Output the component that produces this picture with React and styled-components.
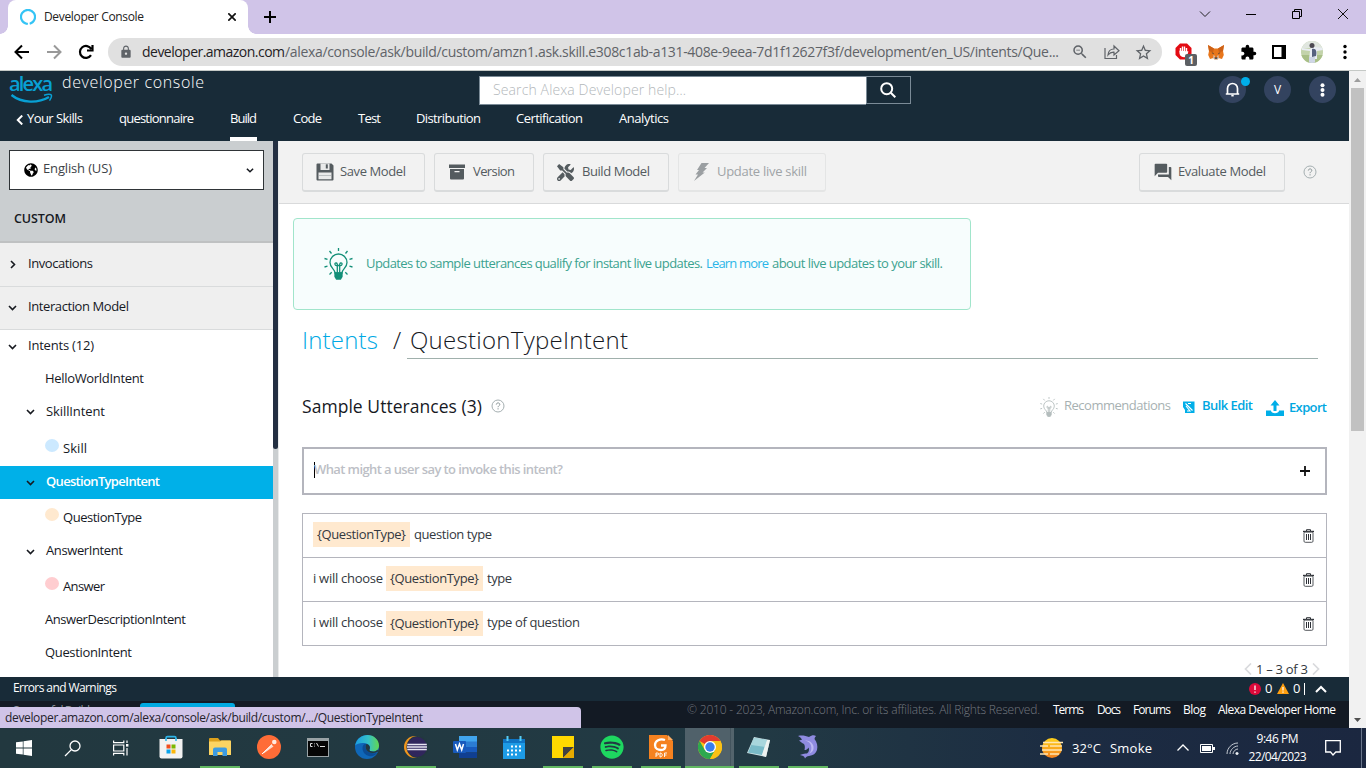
import React, { useLayoutEffect, useRef, useState } from "react";
import styled, { createGlobalStyle } from "styled-components";
import { FaGlobeAmericas, FaTools, FaSpotify } from "react-icons/fa";
import { MdForum, MdLock, MdZoomOut, MdStarBorder, MdExtension } from "react-icons/md";

const Global = createGlobalStyle`
  *, *::before, *::after { box-sizing: border-box; }
  body { margin: 0; background: #fff; overflow: hidden; font-family: "Open Sans", "Noto Sans", sans-serif; font-size: 13px; color: #16191f; }
  svg { display: block; flex: none; }
`;

/* ---------- text that is tracked to fill a given measure ---------- */
const TextBox = styled.span`
  display: block;
  flex: none;
  white-space: nowrap;
  width: ${(p) => p.$w}px;
  margin-left: ${(p) => p.$ml || 0}px;
  margin-bottom: ${(p) => (p.$up || 0) * 2}px;
  font-size: ${(p) => p.$size || 13}px;
  font-weight: ${(p) => p.$weight || 400};
  color: ${(p) => p.$color || "inherit"};
  line-height: ${(p) => p.$lh || 18}px;
`;

function Label({ children, w, ml, size, weight, color, lh, up }) {
  const ref = useRef(null);
  const [tracking, setTracking] = useState(0);
  useLayoutEffect(() => {
    const range = document.createRange();
    range.selectNodeContents(ref.current);
    const natural = range.getBoundingClientRect().width;
    setTracking((w - natural) / Math.max(1, String(children).length - 1));
  }, []);
  return (
    <TextBox $w={w} $ml={ml} $size={size} $weight={weight} $color={color} $lh={lh} $up={up}>
      <span ref={ref} style={{ letterSpacing: tracking }}>{children}</span>
    </TextBox>
  );
}

const Gap = styled.i`
  flex: none;
  width: ${(p) => p.$w}px;
`;

const Screen = styled.div`
  width: 1366px;
  height: 768px;
  display: flex;
  flex-direction: column;
  overflow: hidden;
`;

/* ---------- browser chrome ---------- */
const TabStrip = styled.div`
  height: 34px;
  flex: none;
  display: flex;
  align-items: center;
  background: #d0c4e8;
  padding-left: 8px;
`;
const Tab = styled.div`
  position: relative;
  width: 240px;
  height: 34px;
  background: #fff;
  border-radius: 8px 8px 0 0;
  display: flex;
  align-items: center;
  padding-left: 12px;
  &::before, &::after {
    content: "";
    position: absolute;
    bottom: 0;
    width: 8px;
    height: 8px;
  }
  &::before { left: -8px; background: radial-gradient(circle at 0 0, transparent 7.5px, #fff 8px); }
  &::after { right: -8px; background: radial-gradient(circle at 100% 0, transparent 7.5px, #fff 8px); }
`;
const WindowButtons = styled.div`
  margin-left: auto;
  display: flex;
  align-items: center;
  gap: 34px;
  height: 28px;
  align-self: flex-start;
  padding-right: 17px;
`;
const AddressRow = styled.div`
  height: 37px;
  flex: none;
  display: flex;
  align-items: center;
  background: #fff;
  border-bottom: 1px solid #c5c9c6;
  padding-left: 14px;
`;
const Omnibox = styled.div`
  width: 1054px;
  height: 28px;
  margin-left: 14px;
  border-radius: 14px;
  background: #e0e0e0;
  display: flex;
  align-items: center;
  padding-left: 11px;
  color: #5f6368;
`;
const Extensions = styled.div`
  display: flex;
  align-items: center;
  padding-left: 13px;
`;
const Blocker = styled.div`
  position: relative;
  width: 22px;
  height: 18px;
`;
const BlockerCount = styled.span`
  position: absolute;
  left: 10px;
  top: 11px;
  width: 12px;
  height: 12px;
  border-radius: 2px;
  background: #5c5f63;
  color: #fff;
  font: bold 10px/12px "Open Sans", sans-serif;
  text-align: center;
`;
const Avatar = styled.div`
  width: 22px;
  height: 22px;
  border-radius: 50%;
  overflow: hidden;
`;

/* ---------- page frame ---------- */
const Viewport = styled.div`
  position: relative;
  height: 657px;
  flex: none;
  display: flex;
`;
const Page = styled.div`
  width: 1349px;
  flex: none;
  display: flex;
  flex-direction: column;
`;
const PageScroll = styled.div`
  width: 17px;
  background: #f1f1f1;
  display: flex;
  flex-direction: column;
  align-items: center;
  padding: 7px 0 6px;
`;
const PageThumb = styled.div`
  width: 13px;
  height: 343px;
  margin: 6px 0 auto;
  background: #c1c1c1;
`;

/* ---------- console header ---------- */
const Header = styled.header`
  height: 70px;
  flex: none;
  background: #182b38;
  color: #fff;
  display: flex;
  flex-direction: column;
`;
const HeaderTop = styled.div`
  height: 35px;
  display: flex;
  align-items: flex-start;
  padding-left: 9px;
`;
const Logo = styled.div`
  width: 45px;
  color: #08a0d4;
  margin-top: 2px;
`;
const LogoSwoosh = styled.svg`
  margin: -2px 0 0 1px;
`;
const HeaderTitle = styled.div`
  margin: 0 0 0 8px;
  width: 417px;
`;
const SearchBox = styled.div`
  display: flex;
  margin-top: 5px;
`;
const SearchInput = styled.div`
  width: 387px;
  height: 29px;
  background: #fff;
  border: 1px solid #7b8b97;
  border-right: 0;
  padding: 4px 0 0 13px;
`;
const SearchButton = styled.div`
  width: 45px;
  height: 28px;
  border: 1px solid #7b8b97;
  display: flex;
  align-items: center;
  justify-content: center;
  padding-right: 2px;
`;
const HeaderActions = styled.div`
  display: flex;
  gap: 18px;
  margin: 5px 13px 0 auto;
`;
const RoundButton = styled.div`
  position: relative;
  width: 27px;
  height: 27px;
  border-radius: 50%;
  background: #33435f;
  display: flex;
  align-items: center;
  justify-content: center;
  font-size: 12px;
`;
const NoticeDot = styled.span`
  position: absolute;
  right: -4px;
  top: 1px;
  width: 9px;
  height: 9px;
  border-radius: 50%;
  background: #00aeea;
`;
const Nav = styled.nav`
  height: 35px;
  display: flex;
  padding: 3px 0 0 15px;
`;
const NavItem = styled.div`
  height: 32px;
  margin-left: ${(p) => p.$ml}px;
  border-bottom: 4px solid ${(p) => (p.$active ? "#fff" : "transparent")};
`;

/* ---------- workspace ---------- */
const Workspace = styled.div`
  height: 536px;
  flex: none;
  display: flex;
`;
const Sidebar = styled.aside`
  width: 273px;
  flex: none;
  background: #fff;
`;
const SidebarTop = styled.div`
  height: 102px;
  background: #caced0;
  border-bottom: 2px solid #bfc1c2;
  padding: 9px 9px 0;
`;
const LanguageSelect = styled.div`
  width: 255px;
  height: 40px;
  background: #fff;
  border: 1px solid #2f3437;
  display: flex;
  align-items: center;
  padding-left: 14px;
`;
const SectionName = styled.div`
  padding: 20px 0 0 5px;
`;
const GroupRow = styled.div`
  height: ${(p) => p.$h}px;
  background: #efefef;
  border-bottom: 1px solid #d9dbdc;
  display: flex;
  align-items: center;
  padding: 0 0 1px ${(p) => p.$pl}px;
`;
const TreeRow = styled.div`
  height: ${(p) => p.$h || 33}px;
  padding-left: ${(p) => p.$pl}px;
  padding-top: ${(p) => p.$pt || 0}px;
  display: flex;
  align-items: center;
  background: ${(p) => (p.$active ? "#00b0e8" : "#fff")};
  color: ${(p) => (p.$active ? "#fff" : "#16191f")};
`;
const SlotDot = styled.span`
  width: 14px;
  height: 13px;
  border-radius: 50%;
  margin: 0 4px 5px 0;
  background: ${(p) => p.$color};
`;
const SideScroll = styled.div`
  width: 6px;
  flex: none;
  background: #caced0;
  border-right: 1px solid #e9ebeb;
`;
const SideThumb = styled.div`
  width: 5px;
  height: 308px;
  border-radius: 0 0 3px 3px;
  background: #232f42;
`;
const Main = styled.main`
  width: 1070px;
  background: #fff;
  display: flex;
  flex-direction: column;
`;
const ActionBar = styled.div`
  height: 63px;
  flex: none;
  background: #f2f2f2;
  border-bottom: 1px solid #d9dadb;
  display: flex;
  gap: 9px;
  padding: 12px 0 0 23px;
`;
const ActionButton = styled.div`
  width: ${(p) => p.$w}px;
  height: 39px;
  border: 1px solid ${(p) => (p.$off ? "#e4e5e5" : "#d9dbdc")};
  border-bottom-width: 2px;
  border-radius: 3px;
  display: flex;
  align-items: center;
  padding-left: ${(p) => p.$pl || 13}px;
  color: ${(p) => (p.$off ? "#a0a4a7" : "#545b5f")};
`;
const IconSlot = styled.div`
  width: ${(p) => p.$w}px;
  flex: none;
  display: flex;
`;
const HelpSlot = styled.div`
  margin: 12px 0 0 9px;
`;
const Callout = styled.div`
  width: 678px;
  height: 92px;
  flex: none;
  margin: 14px 0 0 14px;
  border: 1px solid #a1e5cb;
  border-radius: 4px;
  background: #f7fdfd;
  display: flex;
  align-items: center;
  padding-left: 30px;
  color: #3ba28f;
`;
const Breadcrumb = styled.div`
  height: 50px;
  flex: none;
  display: flex;
  align-items: flex-start;
  padding: 13px 0 0 23px;
`;
const NameField = styled.div`
  width: 911px;
  height: 36px;
  margin-left: 5px;
  border-bottom: 1px solid #a0b0ac;
  padding-left: 3px;
`;
const SectionHead = styled.div`
  height: 56px;
  flex: none;
  margin-top: 21px;
  display: flex;
  align-items: flex-start;
  padding: 13px 0 0 23px;
`;
const HeadTools = styled.div`
  display: flex;
  align-items: center;
  height: 26px;
  margin: 0 22px 0 auto;
  color: #00a7e1;
`;
const Lowered = styled.div`
  padding-top: ${(p) => p.$by || 0}px;
`;
const UtteranceInput = styled.div`
  width: 1025px;
  height: 48px;
  flex: none;
  margin: 10px 0 0 23px;
  border: 2px solid #b4b5bd;
  display: flex;
  align-items: center;
  justify-content: space-between;
  padding: 0 15px 2px 9px;
`;
const Caret = styled.div`
  width: 1px;
  height: 16px;
  background: #000;
  margin: 0 -1px 0 1px;
`;
const InputLeft = styled.div`
  display: flex;
  align-items: center;
`;
const UtteranceTable = styled.div`
  width: 1025px;
  height: 133px;
  flex: none;
  margin: 18px 0 0 23px;
  border: 1px solid #b4b5bd;
`;
const UtteranceRow = styled.div`
  height: 44px;
  display: flex;
  align-items: center;
  padding: 0 12px 2px 10px;
  color: #333840;
  &:not(:last-child) { border-bottom: 1px solid #b4b5bd; }
  svg { margin: 2px 0 0 auto; }
`;
const SlotChip = styled.span`
  width: 97px;
  height: 25px;
  margin-left: ${(p) => p.$ml || 0}px;
  margin-top: ${(p) => p.$mt || 0}px;
  padding: 3px 0 0 4px;
  background: #ffe9cf;
`;
const Pager = styled.div`
  display: flex;
  align-items: center;
  justify-content: flex-end;
  height: 20px;
  margin-top: 14px;
  padding-right: 29px;
  color: #333840;
`;
const IssuesBar = styled.div`
  height: 24px;
  flex: none;
  background: #182b38;
  color: #fff;
  display: flex;
  align-items: center;
  padding: 0 22px 1px 13px;
`;
const Issues = styled.div`
  display: flex;
  align-items: center;
  margin-left: auto;
`;
const Footer = styled.footer`
  height: 27px;
  flex: none;
  background: #131a24;
  color: #fff;
  display: flex;
  padding: 0 0 0 13px;
`;
const FooterBuild = styled.div`
  padding-top: 1px;
  height: 27px;
`;
const FooterChip = styled.div`
  width: 95px;
  height: 20px;
  margin: 2px 0 0 50px;
  border-radius: 3px;
  background: #00a9e0;
`;
const StatusBubble = styled.div`
  position: absolute;
  left: 0;
  bottom: 0;
  width: 581px;
  height: 21px;
  border-radius: 0 4px 0 0;
  background: #d0c4e8;
  padding: 2px 0 0 5px;
  color: #24222b;
`;

/* ---------- taskbar ---------- */
const Taskbar = styled.div`
  height: 40px;
  flex: none;
  display: flex;
  color: #fff;
  background: linear-gradient(90deg, #22383f 0%, #223a44 55%, #1c2c42 78%, #1b2740 100%);
`;
const TaskSlot = styled.div`
  width: ${(p) => p.$w || 49}px;
  height: 40px;
  flex: none;
  display: flex;
  flex-direction: column;
  align-items: center;
  justify-content: center;
  background: ${(p) => (p.$active ? "linear-gradient(90deg, #50616a 45px, #33454f 45px, #53646c 46px)" : "none")};
`;
const TaskIcon = styled.div`
  height: 38px;
  width: 100%;
  display: flex;
  align-items: center;
  justify-content: center;
`;
const TaskLine = styled.div`
  width: ${(p) => (p.$full ? "100%" : "40px")};
  height: 2px;
  background: ${(p) => (p.$on ? "#62b862" : "transparent")};
`;
const Tray = styled.div`
  margin-left: auto;
  display: flex;
  align-items: center;
`;
const Clock = styled.div`
  width: 59px;
  display: flex;
  flex-direction: column;
  align-items: center;
  margin-left: 9px;
`;
const ShowDesktop = styled.div`
  width: 5px;
  height: 40px;
  margin-left: 20px;
  border-left: 1px solid #69758a;
`;

/* ---------- drawings ---------- */
const Chevron = ({ dir = "down", color = "#16191f", w = 9, stroke = 1.6 }) => {
  const d = { down: "M1 3l3.5 3.5L8 3", right: "M3 1l3.5 3.5L3 8", left: "M6.5 .5L2.5 4.5l4 4", up: "M1 6.5L4.5 3 8 6.5" }[dir];
  return <svg width={w} height={w} viewBox="0 0 9 9"><path d={d} fill="none" stroke={color} strokeWidth={stroke} /></svg>;
};
const Bulb = ({ w, h, color, sw = 1.3 }) => (
  <svg width={w} height={h} viewBox="0 0 28 32" fill="none" stroke={color} strokeWidth={sw}>
    <path d="M14 0v3M5 3l2 2.500M23 3l-2 2.500M0 10.500l3 .8M28 10.500l-3 .8M0 19l3-.8M28 19l-3-.8M5 26.500l2.200-2.200M23 26.500l-2.200-2.200" />
    <path d="M10.500 25c0-4-5-5-5-10.500a8.500 8.500 0 0 1 17 0c0 5.500-5 6.500-5 10.500z" />
    <path d="M12.800 24.500v-7c-3 .5-3-3-1-2.500 1.200.3 1.200 2.500 1 2.500h2.400c-.2 0-.2-2.200 1-2.500 2-.5 2 3-1 2.500v7" />
    <path d="M10.500 25h7v3.500l-1.500 2.500h-4l-1.500-2.500z" fill={color} />
  </svg>
);
const Help = () => (
  <svg width="14" height="14" viewBox="0 0 14 14">
    <circle cx="7" cy="7" r="6" fill="none" stroke="#a5afb1" />
    <path d="M5.300 5.600c0-2.300 3.500-2.200 3.500-.2 0 1.300-1.700 1.300-1.700 2.800" fill="none" stroke="#8b9698" />
    <rect x="6.500" y="9.300" width="1.100" height="1.100" fill="#8b9698" />
  </svg>
);
const Trash = () => (
  <svg width="11" height="14" viewBox="0 0 11 14" fill="none" stroke="#2d3036">
    <path d="M0 2.500h11" strokeWidth="1.400" /><path d="M3.500 2V.7h4V2" />
    <rect x="1" y="3" width="9" height="10.300" rx="1.200" stroke="#55585d" />
    <path d="M3.500 5v6M5.500 5v6M7.500 5v6" />
  </svg>
);
const Wrap = ({ s = 24, h, vb = "0 0 24 24", children, ...r }) => <svg width={s} height={h || s} viewBox={vb} {...r}>{children}</svg>;

const WindowsLogo = () => <Wrap s={16} vb="0 0 16 16" fill="#fff"><path d="M0 2.300l6.800-.9v6.200H0zM7.500 1.300L16 .1v7.500H7.500zM0 8.400h6.800v6.200L0 13.700zM7.500 8.400H16v7.500l-8.500-1.200z" /></Wrap>;
const TaskSearch = () => <Wrap s={17} vb="0 0 17 17" fill="none" stroke="#fff" strokeWidth="1.300"><circle cx="11" cy="6" r="5" /><path d="M7.400 9.600L1 16" /></Wrap>;
const TaskView = () => <Wrap s={16} vb="0 0 16 16" fill="none" stroke="#fff" strokeWidth="1.200"><path d="M.6.500v2.200h10.200V.500M.6 15.500v-2.200h10.200v2.200M.6 5h10.200v6H.6zM14 .5v2.500M14 8v7.500" /><path d="M13 4h2.400v2.600H13z" fill="#fff" stroke="none" /></Wrap>;
const Store = () => (
  <Wrap s={24}><path d="M7 7V3.200c0-1 .5-1.600 1.500-1.600h7c1 0 1.500.6 1.500 1.600V7" fill="none" stroke="#2fb5e8" strokeWidth="1.600" />
    <path d="M.5 4h23v17.500a2 2 0 0 1-2 2h-19a2 2 0 0 1-2-2z" fill="#f2f2f2" /><path d="M7 6V3M17 6V3" stroke="#2fb5e8" strokeWidth="1.600" />
    <path d="M7.500 9.500h4v4h-4z" fill="#f04e1f" /><path d="M12.500 9.500h4v4h-4z" fill="#7db700" /><path d="M7.500 14.500h4v4h-4z" fill="#0aa3ea" /><path d="M12.500 14.500h4v4h-4z" fill="#fbb60a" />
  </Wrap>
);
const Folder = () => (
  <Wrap s={24} h={20} vb="0 0 24 20"><path d="M1 2a1 1 0 0 1 1-1h8l2 2.500h10a1 1 0 0 1 1 1V9H1z" fill="#dda11c" /><path d="M1 4.500h11l1.500-1H22a1 1 0 0 1 1 1V18H1z" fill="#fcd462" /><path d="M5 19v-6.500a2 2 0 0 1 2-2h10a2 2 0 0 1 2 2V19h-4.500v-4h-5v4z" fill="#3d9be0" /></Wrap>
);
const Postman = () => <Wrap s={24}><circle cx="12" cy="12" r="12" fill="#ff6c37" /><path d="M5 19l9.500-9.500 2 2L8 17.500z" fill="#ffd9cb" /><path d="M5 19L15 9.500" stroke="#fff" fill="none" /><circle cx="17.300" cy="7" r="2.300" fill="#ffe9e0" /></Wrap>;
const Cmd = () => <Wrap s={22} h={19} vb="0 0 22 19"><path d="M0 0h22v19H0z" fill="#9aa3a6" /><path d="M1 3h20v15H1z" fill="#050505" /><path d="M5.500 5.500h-2v3h2M7.500 5.500v.8M7.500 7.700v.8M9.500 5l2 3.500M13 8.500h5" stroke="#ddd" fill="none" /></Wrap>;
const Edge = () => (
  <Wrap s={24}><defs><linearGradient id="eg" x1="0" x2="1"><stop offset="0" stopColor="#1b9de2" /><stop offset=".55" stopColor="#35c1c8" /><stop offset="1" stopColor="#62d84e" /></linearGradient></defs>
    <circle cx="12" cy="12" r="12" fill="#0f67b8" /><path d="M.2 10.500C1.500 3.500 7 0 12.500 0 19 0 24 5 24 10.500c0 4-3 6-6 6-2.500 0-4-1-3.500-2 1-1.500.8-5-3.500-6C6.500 7.500 2 8.500.2 10.500z" fill="url(#eg)" />
    <path d="M7.500 13c0-3 2-4.500 4-4.300-1.500 1.300-1.700 3.500-.5 5.500 1.500 3 6 5 11 3.800-2.500 3.500-6 3.500-8 3-4-1-6.500-4-6.500-8z" fill="#0b4c94" />
    <path d="M11.500 9c3 .5 4.200 3.500 3 5.500-.5 1 1 2 3.500 2 1.500 0 3-.4 4-1.200l1.800-.3-1.300 2c-5 2.500-10.500.5-11.700-3.500-.6-2 .0-3.700.7-4.500z" fill="#22383f" /></Wrap>
);
const Eclipse = () => <Wrap s={24} h={22} vb="0 0 24 22"><circle cx="11" cy="11" r="11" fill="#f0961e" /><circle cx="13.500" cy="11" r="11" fill="#22383f" /><circle cx="13" cy="11" r="10" fill="#30265c" /><path d="M3.300 8.500h19.500M3 11h20M3.300 13.500h19.500" stroke="#e8e6f2" strokeWidth="1.500" /></Wrap>;
const Word = () => (
  <Wrap s={24} h={22} vb="0 0 24 22"><path d="M6 0h18v6H6z" fill="#41a5ee" /><path d="M6 5.500h18V11H6z" fill="#2b7cd3" /><path d="M6 11h18v5.500H6z" fill="#185abd" /><path d="M6 16.500h18V22H6z" fill="#103f91" /><rect y="5" width="13" height="12" rx="1" fill="#185abd" /><path d="M2.500 8l1.800 6 2.200-6 2.200 6 1.800-6" fill="none" stroke="#fff" strokeWidth="1.500" /></Wrap>
);
const Calendar = () => <Wrap s={22} h={23} vb="0 0 22 23"><path d="M0 3h22v20H0z" fill="#1d9be6" /><path d="M0 3h22v4H0z" fill="#0f74c4" /><path d="M4.500 0v5M17.500 0v5" stroke="#55cdf5" strokeWidth="2" /><path d="M8 10.500h10M4 14.500h14M4 18.500h10" stroke="#fff" strokeWidth="2" strokeDasharray="2 2" /></Wrap>;
const Sticky = () => <Wrap s={22} vb="0 0 22 22"><path d="M0 0h22v22H0z" fill="#ffd800" /><path d="M11 11h11L11 22z" fill="#414141" /><path d="M22 11v11H11z" fill="#e8ab00" /></Wrap>;
const Pdf = () => <Wrap s={24}><path d="M0 0h18l6 6v18H0z" fill="#f58220" /><path d="M19 0v5h5z" fill="#ffb066" /><path d="M16 5c-5-2-10 1-10 5 0 3.500 3 5 6 5 3.500 0 4.500-2 4.500-4.500H12" fill="none" stroke="#fff" strokeWidth="2.300" /><path d="M7 22v-4h1.500c1.500 0 1.500 2 0 2H7M11 18v4c3 0 3-4 0-4M15.500 22v-4H18M15.500 20h2" fill="none" stroke="#fff" strokeWidth=".9" /></Wrap>;
const Chrome = () => (
  <Wrap s={24}><circle cx="12" cy="12" r="12" fill="#fbc116" /><path d="M12 12L1.600 6A12 12 0 0 1 22.400 6z" fill="#e33b2e" /><path d="M1.600 6A12 12 0 0 0 12 24l5.200-9L12 12 6.800 15z" fill="#2da94f" /><path d="M12 6h10.400a12 12 0 0 1-10.400 18l5.200-9z" fill="#fbc116" /><circle cx="12" cy="12" r="6" fill="#fff" /><circle cx="12" cy="12" r="4.700" fill="#3b7ded" /></Wrap>
);
const Notepad = () => <Wrap s={24} h={22} vb="0 0 24 22"><path d="M7 1l16 3-4 17L0 17z" fill="#cfe3e6" /><path d="M7 2l13 2-5 15L1 16.500z" fill="#79bac7" /><path d="M7 2l13 2-2 7-14-2z" fill="#a9d6dc" /><path d="M23 4l-4 17-4-2 5-15z" fill="#eef2f0" /></Wrap>;
const Dolphin = () => <Wrap s={24} h={24}><path d="M2 1c4-1 8 0 11 1 3-2 5-2 7-1-1 1-1.500 2-1.500 3 2.500 3 3.500 7 2.500 11-1 3.500-4 5.500-8 6-2 .3-3 1-4 2.500-.5-2.500-2.500-3-5-3.500 3-1.500 5.500-1.500 7-1.500 2-1.500 2.500-4 1.500-6-1 2-2.500 2.500-4 2.500.5-2 .7-4-.5-6C6 8 4 6.500 3 5.500l3-.8C5 3 4 1.800 2 1z" fill="#8f8be0" /><path d="M9 5.500c3 .5 5.500 2.500 6 5 1 3.500 0 6-2 8 3.500-1 5-3.500 4.500-7C16.800 8 13.500 5 9 5.500z" fill="#bdb9f2" /></Wrap>;
const Fox = () => (
  <Wrap s={16} vb="0 0 16 16"><path d="M0 1l6 3.500h4L16 1l-1 6 .8 4-1.800 4-3.500-1-1 1.500h-3L5.500 14 2 15 .2 11 1 7z" fill="#e8761b" /><path d="M0 1l6 3.500-1 4L1 7zM16 1l-6 3.500 1 4L15 7z" fill="#cd6116" /><path d="M5.500 11l1.500 1-.5 2h3l-.5-2 1.500-1 .3 3-1.300 1.500h-3L5.200 14z" fill="#d7c1b3" /><path d="M3.500 8.500l2 .5v1.300zM12.500 8.500l-2 .5v1.300zM6.700 13.500h2.600v1.200H6.700z" fill="#233447" /></Wrap>
);

const LINES = new Set(["folder", "eclipse", "sticky", "spotify", "pdf", "notepad", "dolphin", "chrome"]);
const APPS = [
  ["store", Store], ["folder", Folder], ["postman", Postman], ["cmd", Cmd], ["edge", Edge], ["eclipse", Eclipse], ["word", Word],
  ["calendar", Calendar], ["sticky", Sticky], ["spotify", () => <FaSpotify size={24} color="#1ed760" />], ["pdf", Pdf], ["chrome", Chrome], ["notepad", Notepad], ["dolphin", Dolphin],
];

const NAV = [["questionnaire", 36, 75], ["Build", 36, 27, true], ["Code", 36, 29], ["Test", 36, 23], ["Distribution", 35, 65], ["Certification", 35, 67], ["Analytics", 36, 50]];

const UTTERANCES = [
  { tail: "question type", w: 78, chipTop: 0 },
  { head: "i will choose", tail: "type", w: 25, chipTop: 0 },
  { head: "i will choose", tail: "type of question", w: 93, chipTop: 1 },
];

function BrowserBar() {
  return (
    <>
      <TabStrip>
        <Tab>
          <Wrap s={16} vb="0 0 16 16" fill="none" stroke="#35c4f5" strokeWidth="2.200"><path d="M6.300 14.700A7 7 0 1 1 9.700 14.700M6.300 14.700l1.500.3" /></Wrap>
          <Label ml={8} w={100} size={12} color="#222">Developer Console</Label>
          <Gap $w={84} />
          <Wrap s={8} vb="0 0 8 8" stroke="#111" strokeWidth="1.700"><path d="M.3.300l7.400 7.400M7.700.300L.3 7.700" /></Wrap>
        </Tab>
        <Gap $w={16} />
        <Wrap s={12} vb="0 0 12 12" stroke="#000" strokeWidth="2"><path d="M6 0v12M0 6h12" /></Wrap>
        <WindowButtons>
          <Wrap s={12} vb="0 0 12 12" fill="none" stroke="#222"><path d="M1 3.500l5 5 5-5" /></Wrap>
          <Wrap s={12} vb="0 0 12 12" fill="none" stroke="#000"><path d="M1 6.500h10" /></Wrap>
          <Wrap s={12} vb="0 0 12 12" fill="none" stroke="#000"><path d="M1.500 3.500h7v7h-7zM3.500 3.500v-2h7v7h-2" /></Wrap>
          <Wrap s={12} vb="0 0 12 12" fill="none" stroke="#111"><path d="M1 1l10 10M11 1L1 11" /></Wrap>
        </WindowButtons>
      </TabStrip>
      <AddressRow>
        <Wrap s={16} vb="0 0 16 16" fill="none" stroke="#000" strokeWidth="2"><path d="M15 8H2M8 1.500L1.500 8 8 14.500" /></Wrap>
        <Gap $w={16} />
        <Wrap s={16} vb="0 0 16 16" fill="none" stroke="#999" strokeWidth="2"><path d="M1 8h13M8 1.500L14.500 8 8 14.500" /></Wrap>
        <Gap $w={16} />
        <Wrap s={16} vb="0 0 16 16" fill="none" stroke="#000" strokeWidth="2.200"><path d="M13 11.200A6 6 0 1 1 13.200 5M9 6.500h5.500V1" /></Wrap>
        <Omnibox>
          <MdLock size={14} />
          <Label ml={9} w={143} size={14} color="#1f2023">developer.amazon.com</Label>
          <Label w={774} size={14}>/alexa/console/ask/build/custom/amzn1.ask.skill.e308c1ab-a131-408e-9eea-7d1f12627f3f/development/en_US/intents/Que...</Label>
          <Gap $w={12} />
          <MdZoomOut size={18} />
          <Gap $w={15} />
          <Wrap s={16} vb="0 0 16 16" fill="none" stroke="#5f6368" strokeWidth="1.200"><path d="M1 4v10.500h11.500V11" /><path d="M4 11c.3-4 2.500-6 6-6V2l5 4.700L10 11V8.200C7 8 5.500 9 4 11z" /></Wrap>
          <Gap $w={14} />
          <MdStarBorder size={19} />
        </Omnibox>
        <Extensions>
          <Blocker>
            <Wrap s={17} vb="0 0 17 17"><path d="M5 .5h7L16.500 5v7L12 16.500H5L.5 12V5z" fill="#e30b13" /><path d="M5.500 9V5M7.500 8.500V3.500M9.500 8.500V3.500M11.500 9V5M5 8.500c0 4 1.500 5 4 5 2 0 3-2 3.500-4.500z" stroke="#fff" strokeWidth="1.400" fill="#fff" /></Wrap>
            <BlockerCount>1</BlockerCount>
          </Blocker>
          <Gap $w={11} />
          <Fox />
          <Gap $w={16} />
          <MdExtension size={17} color="#000" />
          <Gap $w={15} />
          <Wrap s={14} vb="0 0 14 14"><path d="M0 0h14v14H0z" /><path d="M2 2h7.500v10H2z" fill="#fff" /></Wrap>
          <Gap $w={15} />
          <Avatar>
            <Wrap s={22} vb="0 0 22 22"><path d="M0 0h22v22H0z" fill="#c3d3ab" /><path d="M0 0h22v7H0z" fill="#e0e6df" /><path d="M0 14h22v8H0z" fill="#a9bf87" /><path d="M1 7l8 1 2-2h3l8 1v2l-6 1v8H8l1-8-8-1z" fill="#e9edf3" /><circle cx="11" cy="4.500" r="2.500" fill="#4d4a52" /><path d="M11 8c4-1 5 2 4 7l-4 1z" fill="#56617e" /><path d="M8 16h6v6H8z" fill="#cfd6e6" /></Wrap>
          </Avatar>
          <Gap $w={20} />
          <Wrap s={4} h={16} vb="0 0 4 16"><circle cx="2" cy="2.500" r="1.700" /><circle cx="2" cy="8" r="1.700" /><circle cx="2" cy="13.500" r="1.700" /></Wrap>
        </Extensions>
      </AddressRow>
    </>
  );
}

function ConsoleHeader() {
  return (
    <Header>
      <HeaderTop>
        <Logo>
          <Label w={44} size={20} lh={22} weight={600}>alexa</Label>
          <LogoSwoosh width="43" height="11" viewBox="0 0 43 11" fill="none" stroke="#08a0d4"><path d="M1.500 2C12 10.500 28 10.500 39 4" strokeWidth="2.400" /><path d="M34 2.200c3-1 6-1.300 7-.5.8.8 0 3.800-1.500 6" strokeWidth="1.500" /></LogoSwoosh>
        </Logo>
        <HeaderTitle><Label w={142} size={16} lh={23} weight={300}>developer console</Label></HeaderTitle>
        <SearchBox>
          <SearchInput><Label w={193} size={14} weight={300} color="#b3b8bb">Search Alexa Developer help…</Label></SearchInput>
          <SearchButton><Wrap s={16} vb="0 0 16 16" fill="none" stroke="#fff" strokeWidth="2"><circle cx="6.700" cy="6.700" r="5.500" /><path d="M10.800 10.800l4.500 4.500" /></Wrap></SearchButton>
        </SearchBox>
        <HeaderActions>
          <RoundButton>
            <Wrap s={15} vb="0 0 15 15" fill="none" stroke="#fff" strokeWidth="1.700"><path d="M.8 12h13.400M2.500 12V6.500a5 5 0 0 1 10 0V12" /><path d="M6.300 13.600h2.400" /></Wrap>
            <NoticeDot />
          </RoundButton>
          <RoundButton>V</RoundButton>
          <RoundButton><Wrap s={5} h={14} vb="0 0 5 14" fill="#fff"><circle cx="2.500" cy="2.300" r="2" /><circle cx="2.500" cy="7" r="2" /><circle cx="2.500" cy="11.700" r="2" /></Wrap></RoundButton>
        </HeaderActions>
      </HeaderTop>
      <Nav>
        <Lowered $by={6}><Chevron dir="left" color="#fff" w={10} stroke={1.800} /></Lowered>
        <NavItem $ml={2}><Label w={56}>Your Skills</Label></NavItem>
        {NAV.map(([t, ml, w, active]) => <NavItem key={t} $ml={ml} $active={active}><Label w={w}>{t}</Label></NavItem>)}
      </Nav>
    </Header>
  );
}

function SideTree() {
  return (
    <Sidebar>
      <SidebarTop>
        <LanguageSelect>
          <FaGlobeAmericas size={14} color="#000" />
          <Label ml={5} w={69} color="#3d4348" up={2}>English (US)</Label>
          <Gap $w={134} />
          <Chevron w={8} stroke={1.700} />
        </LanguageSelect>
        <SectionName><Label w={52} size={12.5} weight={600}>CUSTOM</Label></SectionName>
      </SidebarTop>
      <GroupRow $h={44} $pl={8}><Chevron dir="right" /><Label ml={11} w={65} up={1}>Invocations</Label></GroupRow>
      <GroupRow $h={43} $pl={8}><Chevron /><Label ml={11} w={101} up={1.5}>Interaction Model</Label></GroupRow>
      <TreeRow $h={32} $pl={8}><Chevron /><Label ml={11} w={66} up={1}>Intents (12)</Label></TreeRow>
      <TreeRow $pl={45}><Label w={99} up={1}>HelloWorldIntent</Label></TreeRow>
      <TreeRow $pl={26}><Chevron /><Label ml={11} w={59} up={1}>SkillIntent</Label></TreeRow>
      <TreeRow $h={38} $pl={45} $pt={2}><SlotDot $color="#cce9ff" /><Label w={24}>Skill</Label></TreeRow>
      <TreeRow $pl={26} $active><Chevron /><Label ml={11} w={114} weight={600} up={1.5}>QuestionTypeIntent</Label></TreeRow>
      <TreeRow $h={36} $pl={45}><SlotDot $color="#ffe9cf" /><Label w={79}>QuestionType</Label></TreeRow>
      <TreeRow $pl={26}><Chevron /><Label ml={11} w={77} up={1.5}>AnswerIntent</Label></TreeRow>
      <TreeRow $h={36} $pl={45}><SlotDot $color="#ffcdd0" /><Label w={42}>Answer</Label></TreeRow>
      <TreeRow $pl={45}><Label w={141} up={1.5}>AnswerDescriptionIntent</Label></TreeRow>
      <TreeRow $pl={45}><Label w={87} up={1.5}>QuestionIntent</Label></TreeRow>
    </Sidebar>
  );
}

function IntentEditor() {
  return (
    <Main>
      <ActionBar>
        <ActionButton $w={123}>
          <IconSlot $w={24}><Wrap s={18} vb="0 0 18 18"><path d="M.5 1.500a1 1 0 0 1 1-1h14l2 2v14a1 1 0 0 1-1 1h-15a1 1 0 0 1-1-1z" fill="#545b5f" /><path d="M4.500.5h9V7h-9zM2.500 9.500h13v6.800h-13z" fill="#e9eaea" /><path d="M9.800 1.300h2v4.200h-2z" fill="#545b5f" /><path d="M3 12.500h12" stroke="#bcc0c2" /></Wrap></IconSlot>
          <Label w={66} up={1}>Save Model</Label>
        </ActionButton>
        <ActionButton $w={100} $pl={14}>
          <IconSlot $w={24}><Wrap s={16} vb="0 0 16 16" fill="#545b5f"><path d="M0 .5h16V4H0z" /><path fillRule="evenodd" d="M1 5h14v9.500a1 1 0 0 1-1 1H2a1 1 0 0 1-1-1zM5.500 7v1.300h5V7z" /></Wrap></IconSlot>
          <Label w={42} up={1}>Version</Label>
        </ActionButton>
        <ActionButton $w={126}><IconSlot $w={25}><FaTools size={17} /></IconSlot><Label w={68} up={1}>Build Model</Label></ActionButton>
        <ActionButton $w={148} $off>
          <IconSlot $w={25}><Wrap s={18} vb="0 0 18 18" fill="#9b9fa2"><path d="M9.500 0H17l-4.500 5h2.500l-4.500 4.500h2.300L2 18l4-6.500H3.500L7 7H5z" /></Wrap></IconSlot>
          <Label w={90} up={1}>Update live skill</Label>
        </ActionButton>
        <Gap $w={295} />
        <ActionButton $w={146}><IconSlot $w={25}><MdForum size={20} /></IconSlot><Label w={88} up={1}>Evaluate Model</Label></ActionButton>
        <HelpSlot><Help /></HelpSlot>
      </ActionBar>
      <Callout>
        <Bulb w={29} h={32} color="#138f78" />
        <Label ml={13} w={337} up={1}>Updates to sample utterances qualify for instant live updates.</Label>
        <Label ml={3} w={63} up={1} color="#2bb5e8">Learn more</Label>
        <Label ml={3} w={171} up={1}>about live updates to your skill.</Label>
      </Callout>
      <Breadcrumb>
        <Label w={76} size={24} lh={34} weight={300} color="#00a9e4">Intents</Label>
        <Label ml={15} w={9} size={24} lh={34} weight={300}>/</Label>
        <NameField><Label w={218} size={24} lh={34} weight={300}>QuestionTypeIntent</Label></NameField>
      </Breadcrumb>
      <SectionHead>
        <Label w={180} size={17.5} lh={24}>Sample Utterances (3)</Label>
        <Gap $w={9} />
        <Lowered $by={5}><Help /></Lowered>
        <HeadTools>
          <Bulb w={18} h={20} color="#b4bdbd" sw={1.400} />
          <Label ml={6} w={107} up={2} weight={500} color="#a7b1b2">Recommendations</Label>
          <Gap $w={12} />
          <Wrap s={12} vb="0 0 12 12"><path d="M0 .5h11.500V12H2V9L0 6z" fill="#00aee8" /><path d="M2.500 2.500l7 7M5 2.500h3M3 5l4 5H4" stroke="#fff" strokeWidth="1.100" fill="none" /></Wrap>
          <Label ml={7} w={51} weight={600} up={2}>Bulk Edit</Label>
          <Gap $w={13} />
          <Lowered $by={2}><Wrap s={18} h={16} vb="0 0 18 16" fill="#00aee8"><path d="M9 0l4.500 5.500h-3V11h-3V5.500h-3z" /><path d="M0 10.500h5c0 3.500 8 3.500 8 0h5V16H0z" /></Wrap></Lowered>
          <Lowered><Label ml={5} w={38} weight={600}>Export</Label></Lowered>
        </HeadTools>
      </SectionHead>
      <UtteranceInput>
        <InputLeft><Caret /><Label w={249} weight={600} up={1} color="#bdbfc6">What might a user say to invoke this intent?</Label></InputLeft>
        <Lowered $by={2}><Wrap s={10} vb="0 0 10 10" stroke="#111" strokeWidth="1.800"><path d="M5 0v10M0 5h10" /></Wrap></Lowered>
      </UtteranceInput>
      <UtteranceTable>
        {UTTERANCES.map((u, i) => (
          <UtteranceRow key={i}>
            {u.head && <Label w={70} up={1}>{u.head}</Label>}
            <SlotChip $ml={u.head ? 3 : 0} $mt={u.chipTop}><Label w={89}>{"{QuestionType}"}</Label></SlotChip>
            <Label ml={4} w={u.w} up={1}>{u.tail}</Label>
            <Trash />
          </UtteranceRow>
        ))}
      </UtteranceTable>
      <Pager>
        <Wrap s={8} h={12} vb="0 0 8 12" fill="none" stroke="#d9dadd" strokeWidth="1.700"><path d="M7 .5L1.500 6 7 11.500" /></Wrap>
        <Label ml={4} w={52}>1 – 3 of 3</Label>
        <Gap $w={4} />
        <Wrap s={8} h={12} vb="0 0 8 12" fill="none" stroke="#d9dadd" strokeWidth="1.700"><path d="M1 .5L6.500 6 1 11.500" /></Wrap>
      </Pager>
    </Main>
  );
}

function WindowsTaskbar() {
  return (
    <Taskbar>
      <TaskSlot $w={48}><WindowsLogo /></TaskSlot>
      <TaskSlot $w={48}><TaskSearch /></TaskSlot>
      <TaskSlot $w={50}><TaskView /></TaskSlot>
      {APPS.map(([id, Icon]) => (
        <TaskSlot key={id} $active={id === "chrome"}>
          <TaskIcon><Icon /></TaskIcon>
          <TaskLine $on={LINES.has(id)} $full={id === "chrome"} />
        </TaskSlot>
      ))}
      <Tray>
        <Wrap s={24} h={20} vb="0 0 24 20"><defs><linearGradient id="sun" x1="0" y1="0" x2="0" y2="1"><stop offset="0" stopColor="#ffd11a" /><stop offset="1" stopColor="#f5821f" /></linearGradient></defs><circle cx="12" cy="10" r="10" fill="url(#sun)" /><path d="M3 4.500h20M0 8h8M10 8h12M2 12h20M0 16h8M10 16h9" stroke="#ffe6b3" strokeWidth="1.600" /></Wrap>
        <Label ml={8} w={29}>32°C</Label>
        <Label ml={9} w={42}>Smoke</Label>
        <Gap $w={25} />
        <Wrap s={12} vb="0 0 12 12" fill="none" stroke="#fff" strokeWidth="1.300"><path d="M.5 8.500L6 3l5.500 5.500" /></Wrap>
        <Gap $w={11} />
        <Wrap s={15} h={9} vb="0 0 15 9"><path d="M.5.500h12v8H.5z" fill="none" stroke="#fff" /><path d="M2 2h9v5H2zM13 3h2v3h-2z" fill="#fff" /></Wrap>
        <Gap $w={11} />
        <Wrap s={13} vb="0 0 13 13" fill="none" stroke="#c5cbd3"><path d="M1 12C1 6 6 1 12 1M4 12c0-4 4-8 8-8M7 12c0-2.500 2.500-5 5-5" /><circle cx="11" cy="11.500" r="1.200" fill="#fff" /></Wrap>
        <Clock>
          <Label w={42} size={12}>9:46 PM</Label>
          <Label w={58} size={12}>22/04/2023</Label>
        </Clock>
        <Gap $w={18} />
        <Wrap s={16} vb="0 0 16 16" fill="none" stroke="#fff" strokeWidth="1.300"><path d="M.7.700h14.600V12h-4.500L8 15l-2.500-3H.7z" /></Wrap>
        <ShowDesktop />
      </Tray>
    </Taskbar>
  );
}

export default function App() {
  return (
    <Screen>
      <Global />
      <BrowserBar />
      <Viewport>
        <Page>
          <ConsoleHeader />
          <Workspace>
            <SideTree />
            <SideScroll><SideThumb /></SideScroll>
            <IntentEditor />
          </Workspace>
          <IssuesBar>
            <Label w={104} size={12} up={0.5}>Errors and Warnings</Label>
            <Issues>
              <Wrap s={12} vb="0 0 12 12"><circle cx="6" cy="6" r="6" fill="#dc0a3a" /><path d="M6 2.500v4.500M6 8.500v1.300" stroke="#fff" strokeWidth="1.300" /></Wrap>
              <Label ml={4} w={7} up={1}>0</Label>
              <Gap $w={5} />
              <Wrap s={12} h={11} vb="0 0 12 11"><path d="M6 0l6 11H0z" fill="#ff9f10" /><path d="M6 4v3.500M6 8.500v1.200" stroke="#fff" strokeWidth="1.200" /></Wrap>
              <Label ml={4} w={7} up={1}>0</Label>
              <Gap $w={4} />
              <Wrap s={1} h={12} vb="0 0 1 12"><path d="M0 0h1v12H0z" fill="#fff" /></Wrap>
              <Gap $w={10} />
              <Wrap s={12} h={8} vb="0 0 12 8" fill="none" stroke="#fff" strokeWidth="2"><path d="M1 7l5-5 5 5" /></Wrap>
            </Issues>
          </IssuesBar>
          <Footer>
            <FooterBuild><Label w={77} size={12} color="#8b9198">Successful Build</Label></FooterBuild>
            <FooterChip />
            <Gap $w={452} />
            <Label w={353} size={12} weight={300} color="#737980">© 2010 - 2023, Amazon.com, Inc. or its affiliates. All Rights Reserved.</Label>
            <Label ml={13} w={31} size={12}>Terms</Label>
            <Label ml={13} w={24} size={12}>Docs</Label>
            <Label ml={12} w={38} size={12}>Forums</Label>
            <Label ml={12} w={23} size={12}>Blog</Label>
            <Label ml={12} w={118} size={12}>Alexa Developer Home</Label>
          </Footer>
        </Page>
        <PageScroll>
          <Wrap s={7} h={4} vb="0 0 7 4"><path d="M0 4l3.500-4L7 4z" fill="#9d9d9d" /></Wrap>
          <PageThumb />
          <Wrap s={7} h={4} vb="0 0 7 4"><path d="M0 0l3.500 4L7 0z" fill="#505050" /></Wrap>
        </PageScroll>
        <StatusBubble><Label w={418} size={12}>developer.amazon.com/alexa/console/ask/build/custom/.../QuestionTypeIntent</Label></StatusBubble>
      </Viewport>
      <WindowsTaskbar />
    </Screen>
  );
}
